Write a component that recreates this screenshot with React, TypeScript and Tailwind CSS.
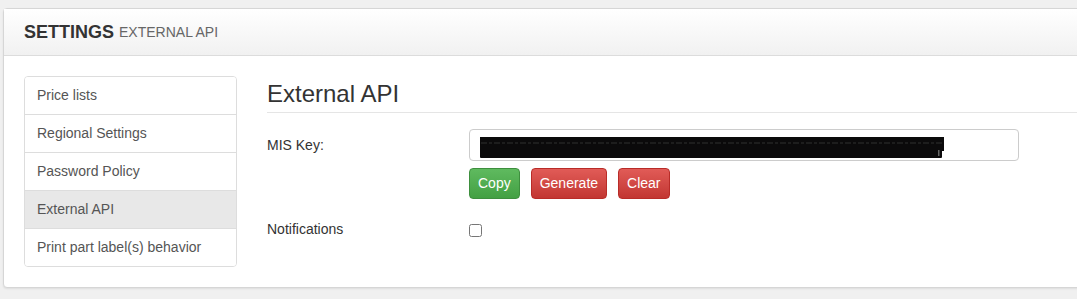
import React, { useState } from 'react';

const menuItems = [
  'Price lists',
  'Regional Settings',
  'Password Policy',
  'External API',
  'Print part label(s) behavior',
];

const Redaction = () => (
  <svg width="466" height="22" viewBox="0 0 466 22" className="block">
    {/* scribbled-over key */}
    <rect x="0" y="0" width="464" height="14" fill="#0b0a0b" />
    <rect x="0" y="7" width="462" height="14" rx="1" fill="#0b0a0b" />
    <line x1="1" y1="6" x2="462" y2="6" stroke="#3a3a3a" strokeWidth="0.8" strokeDasharray="6 2 3 2" />
    <rect x="458" y="13" width="1.5" height="6" fill="#666" />
  </svg>
);

const App = () => {
  const [active, setActive] = useState('External API');
  const [notify, setNotify] = useState(false);

  return (
    <div className="h-[299px] w-full overflow-hidden bg-[#f0f0f0] pt-[8px] pl-[3px] font-['Liberation_Sans',Arial,sans-serif]">
      <div className="w-[1110px] rounded-[4px] border border-[#d6d6d6] bg-white shadow-[0_1px_2px_rgba(0,0,0,0.08)]">
        {/* Header */}
        <div className="flex h-[47px] items-center border-b border-[#dcdcdc] bg-linear-to-b from-white to-[#f1f1f1] pl-[20px]">
          <span className="text-[18px] font-bold text-[#333]">SETTINGS</span>
          <span className="ml-[5px] text-[14px] text-[#666]">EXTERNAL API</span>
        </div>

        {/* Body */}
        <div className="flex pt-[20px] pb-[20px] pl-[20px]">
          {/* Sidebar */}
          <ul className="w-[213px] shrink-0 overflow-hidden rounded-[4px] border border-[#dddddd]">
            {menuItems.map((item, i) => (
              <li
                key={item}
                onClick={() => setActive(item)}
                className={`flex h-[37px] cursor-pointer items-center pl-[12px] text-[14px] text-[#555] ${
                  i > 0 ? 'h-[38px] border-t border-[#dddddd]' : ''
                } ${active === item ? 'bg-[#e8e8e8]' : 'bg-white'}`}
              >
                {item}
              </li>
            ))}
          </ul>

          {/* Content */}
          <div className="ml-[30px] flex-1">
            <h3 className="flex h-[37px] items-center border-b border-[#e5e5e5] text-[24px] leading-none text-[#333]">
              External API
            </h3>

            <div className="mt-[16px] flex items-center">
              <label className="w-[202px] shrink-0 text-[14px] text-[#333]">MIS Key:</label>
              <div className="flex h-[32px] w-[550px] items-start rounded-[4px] border border-[#cccccc] bg-white pt-[7px] pl-[10px]">
                <Redaction />
              </div>
            </div>

            <div className="mt-[7px] ml-[202px] flex gap-[11px]">
              <button className="h-[31px] rounded-[4px] border border-[#3e8f3e] bg-linear-to-b from-[#5fba5f] to-[#43a043] px-[8px] text-[14px] text-white">
                Copy
              </button>
              <button className="h-[31px] rounded-[4px] border border-[#b92c28] bg-linear-to-b from-[#e15b57] to-[#c23632] px-[8px] text-[14px] text-white">
                Generate
              </button>
              <button className="h-[31px] rounded-[4px] border border-[#b92c28] bg-linear-to-b from-[#e15b57] to-[#c23632] px-[8px] text-[14px] text-white">
                Clear
              </button>
            </div>

            <div className="mt-[20px] flex items-start">
              <label className="w-[202px] shrink-0 text-[14px] leading-[20px] text-[#333]">Notifications</label>
              <input
                type="checkbox"
                checked={notify}
                onChange={e => setNotify(e.target.checked)}
                className="mt-[5px] h-[13px] w-[13px]"
              />
            </div>
          </div>
        </div>
      </div>
    </div>
  );
};

export default App;
